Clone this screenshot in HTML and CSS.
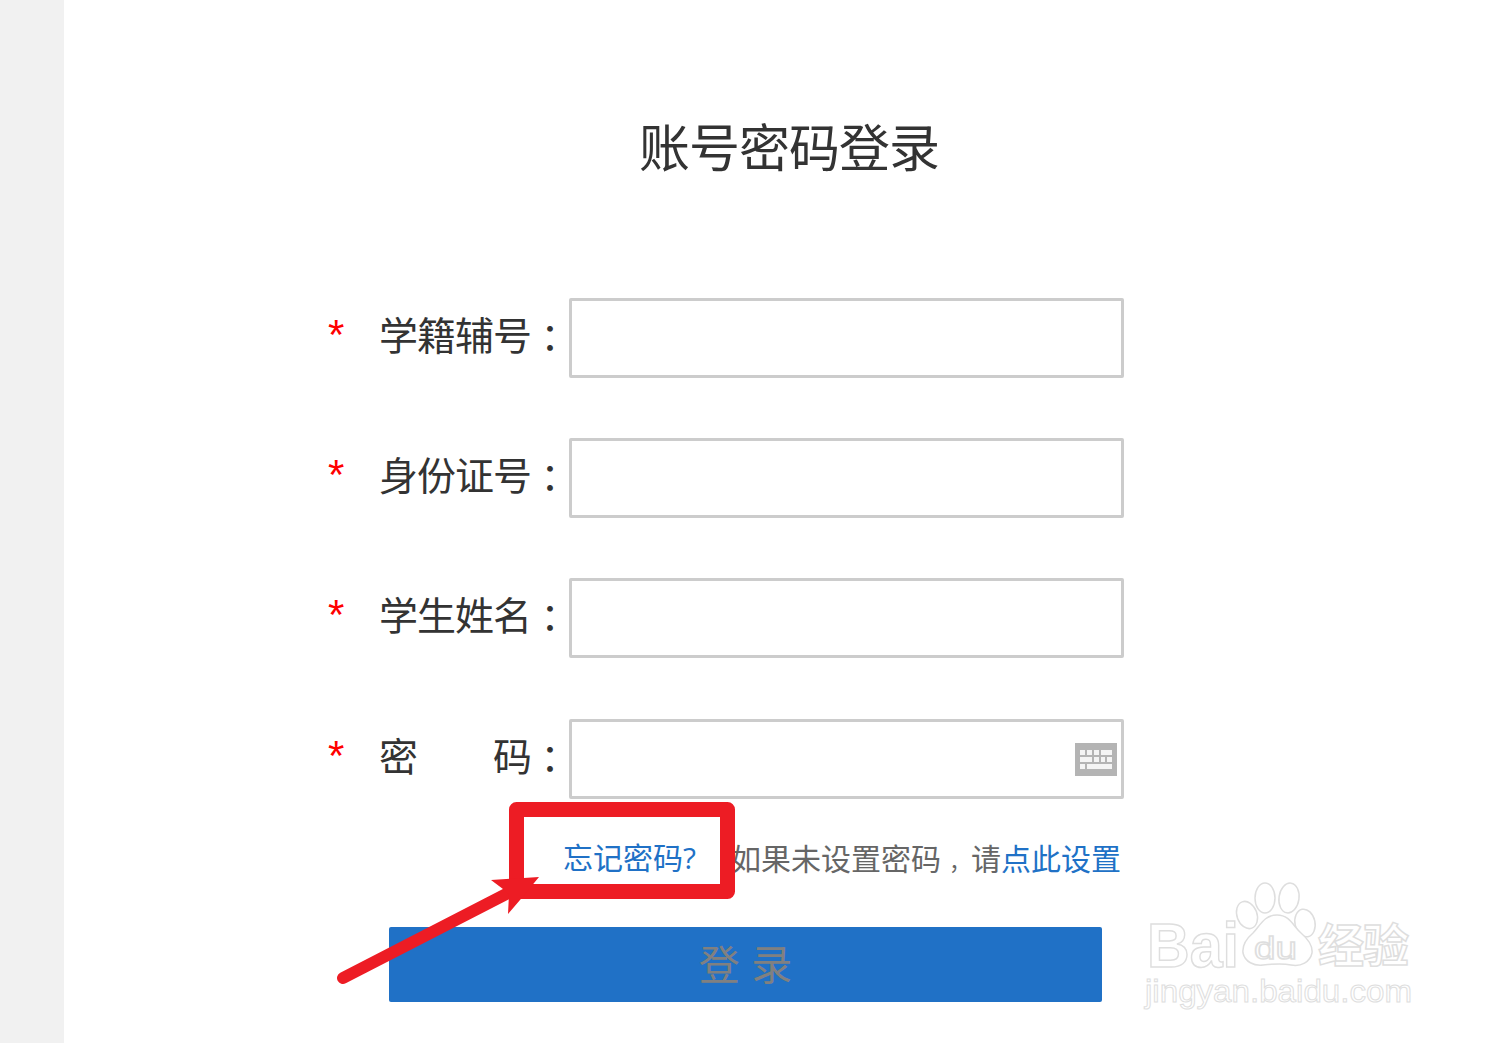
FILE: index.html
```html
<!DOCTYPE html>
<html lang="zh-CN">
<head>
  <meta charset="UTF-8" />
  <meta name="viewport" content="width=device-width, initial-scale=1.0" />
  <title>账号密码登录</title>
  <link rel="stylesheet" href="styles.css">
</head>
<body>
  <div class="gutter"></div>
  <div class="main">
    <h1 class="title">账号密码登录</h1>
    <form class="login-form">
      <div class="row">
        <span class="star">*</span>
        <label class="label">学籍辅号</label>
        <span class="colon">：</span>
        <input class="field" type="text" />
      </div>
      <div class="row">
        <span class="star">*</span>
        <label class="label">身份证号</label>
        <span class="colon">：</span>
        <input class="field" type="text" />
      </div>
      <div class="row">
        <span class="star">*</span>
        <label class="label">学生姓名</label>
        <span class="colon">：</span>
        <input class="field" type="text" />
      </div>
      <div class="row row-password">
        <span class="star">*</span>
        <label class="label label-spread"><span>密</span><span>码</span></label>
        <span class="colon">：</span>
        <div class="field-wrap">
          <input class="field" type="password" />
          <svg class="keyboard" viewBox="0 0 42 33" width="42" height="33">
            <rect width="42" height="33" fill="#b4b4b4" />
            <g fill="#f4f4f4">
              <rect x="5" y="7" width="5" height="5" />
              <rect x="12" y="7" width="5" height="5" />
              <rect x="19" y="7" width="5" height="5" />
              <rect x="26" y="7" width="11" height="5" />
              <rect x="5" y="14" width="12" height="5" />
              <rect x="19" y="14" width="5" height="5" />
              <rect x="26" y="14" width="4" height="5" />
              <rect x="32" y="14" width="5" height="5" />
              <rect x="5" y="21" width="5" height="5" />
              <rect x="12" y="21" width="25" height="5" />
            </g>
          </svg>
        </div>
      </div>
      <div class="links">
        <a class="link forgot" href="#">忘记密码?</a>
        <span class="hint">如果未设置密码<span class="comma">，</span>请<a class="link" href="#">点此设置</a></span>
      </div>
      <button class="submit" type="button">登 录</button>
    </form>
  </div>

  <!-- screenshot annotation and watermark sit on top of the page -->
  <svg class="overlay" viewBox="0 0 1493 1043" width="1493" height="1043">
    <g class="watermark">
      <ellipse cx="1265" cy="898" rx="10" ry="15" />
      <ellipse cx="1289" cy="898" rx="10" ry="15" transform="rotate(8 1289 898)" />
      <ellipse cx="1247" cy="915" rx="10" ry="14" transform="rotate(-20 1247 915)" />
      <ellipse cx="1305" cy="923" rx="10" ry="14" transform="rotate(-12 1305 923)" />
      <path d="M1277 915c-13 0-17 11-24 18-7 6-11 12-10 20 2 9 11 13 20 12 9-1 19-2 28 0 10 2 19-3 21-12 1-8-4-14-11-20-8-7-11-18-24-18z" />
      <text class="wm-big" x="1147" y="967" textLength="92" lengthAdjust="spacingAndGlyphs">Bai</text>
      <text class="wm-du" x="1254" y="959" textLength="43" lengthAdjust="spacingAndGlyphs">du</text>
      <text class="wm-cn" x="1318" y="962" textLength="91">经验</text>
      <text class="wm-url" x="1145" y="1002" textLength="267" lengthAdjust="spacingAndGlyphs">jingyan.baidu.com</text>
    </g>
    <rect class="mark-box" x="516.5" y="809.5" width="211" height="82" />
    <line class="mark-shaft" x1="343" y1="978" x2="510" y2="892" />
    <polygon class="mark-head" points="539,877 491,880 503,889 509,894 508,914 520,900" />
  </svg>
</body>
</html>
```
FILE: styles.css
```css
* {
  box-sizing: border-box;
}
body {
  margin: 0;
  display: flex;
  min-height: 100vh;
  overflow: hidden;
  position: relative;
  background: #fff;
  color: #333;
  font-family: "Liberation Sans", "Noto Sans CJK SC", sans-serif;
}
.gutter {
  width: 64px;
  background: #f1f1f1;
}
.main {
  flex: 1;
}
.title {
  margin: 0;
  padding: 115px 0 0 21px;
  height: 298px;
  text-align: center;
  font-size: 51px;
  letter-spacing: -1px;
  line-height: 70px;
  font-weight: 400;
}
.login-form {
  width: 796px;
  margin-left: 264px;
}
.row {
  display: flex;
  align-items: center;
  height: 80px;
  margin-bottom: 60px;
  font-size: 39px;
}
.row-password {
  margin-top: 61px;
  margin-bottom: 0;
}
.star {
  width: 51px;
  color: #f00;
  font-size: 42px;
  margin-top: -6px;
}
.label {
  width: 152px;
  margin-top: -10px;
  letter-spacing: -1px;
}
.label-spread {
  display: flex;
  justify-content: space-between;
}
.colon {
  width: 38px;
  margin-top: -6px;
  font-family: "Noto Sans CJK TC", sans-serif;
  font-size: 38px;
}
.field {
  flex: 1;
  width: 100%;
  height: 80px;
  min-width: 0;
  border: 3px solid #ccc;
  border-radius: 2px;
  background: #fff;
  outline: none;
}
.field-wrap {
  flex: 1;
  position: relative;
  height: 80px;
}
.keyboard {
  position: absolute;
  top: 24px;
  right: 7px;
}
.links {
  display: flex;
  justify-content: flex-end;
  gap: 35px;
  height: 83px;
  padding: 39px 3px 0 0;
  font-size: 30px;
  line-height: 44px;
  color: #666;
}
.forgot {
  margin-top: -2px;
  font-family: "Open Sans", "Noto Sans CJK SC", sans-serif;
}
.comma {
  padding-left: 8px;
  font-size: 22px;
}
.link {
  color: #2071c6;
  text-decoration: none;
}
.submit {
  display: block;
  width: 713px;
  height: 75px;
  margin: 45px 0 0 61px;
  padding: 0 0 6px;
  border: none;
  border-radius: 2px;
  background: #2071c6;
  color: #808080;
  font-family: inherit;
  font-size: 41px;
}
.overlay {
  position: absolute;
  top: 0;
  left: 0;
  pointer-events: none;
}
.mark-box {
  fill: none;
  stroke: #ed1c24;
  stroke-width: 15;
  stroke-linejoin: round;
}
.mark-shaft {
  stroke: #ed1c24;
  stroke-width: 12;
  stroke-linecap: round;
}
.mark-head {
  fill: #ed1c24;
}
.watermark {
  fill: #fff;
  stroke: #dedede;
  stroke-width: 1.5;
}
.wm-big {
  font-family: "Liberation Sans", sans-serif;
  font-weight: 700;
  font-size: 63px;
}
.wm-du {
  font-family: "Liberation Sans", sans-serif;
  font-size: 32px;
}
.wm-cn {
  font-family: "Noto Sans CJK SC", sans-serif;
  font-weight: 700;
  font-size: 46px;
}
.wm-url {
  font-family: "Liberation Sans", sans-serif;
  font-size: 32px;
  stroke-width: 1;
}
```
